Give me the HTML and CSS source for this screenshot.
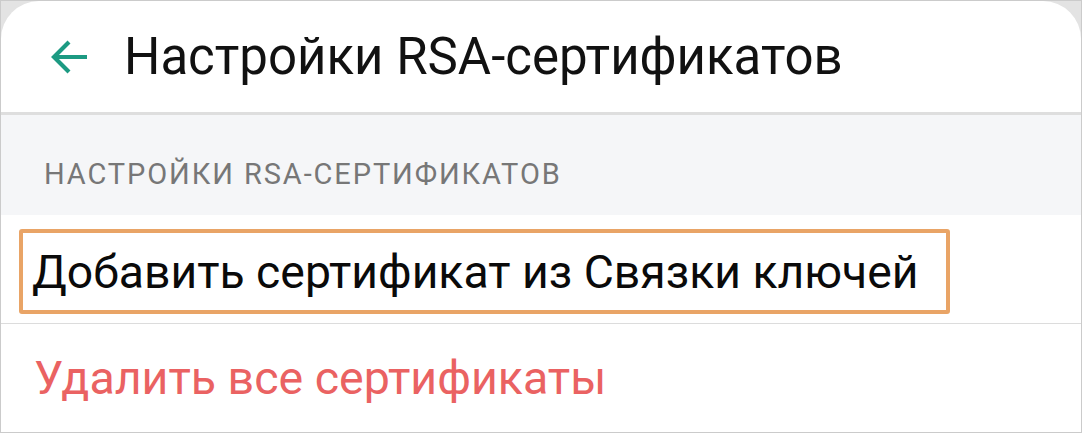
FILE: index.html
```html
<!DOCTYPE html>
<html lang="ru">
<head>
  <meta charset="UTF-8">
  <meta name="viewport" content="width=device-width, initial-scale=1.0">
  <title>Настройки RSA-сертификатов</title>
  <link rel="stylesheet" href="styles.css">
</head>
<body>
  <div class="frame">
    <div class="screen">
      <div class="toolbar">
        <svg class="back" width="38" height="36" viewBox="0 0 38 36">
          <path d="M37 18 H4 M19 3 L4 18 L19 33" fill="none" stroke="#1c9a82" stroke-width="4.2"/>
        </svg>
        <h1>Настройки RSA-сертификатов</h1>
      </div>
      <div class="section-head">НАСТРОЙКИ RSA-СЕРТИФИКАТОВ</div>
      <div class="row row-add">
        <div class="highlight">Добавить сертификат из Связки ключей</div>
      </div>
      <div class="row row-delete">Удалить все сертификаты</div>
    </div>
  </div>
</body>
</html>
```
FILE: styles.css
```css
body { margin: 0; font-family: Roboto, "Noto Sans", sans-serif; background-color: #fff; }
.frame { width: 1082px; height: 433px; box-sizing: border-box; border: 1px solid #cbcbcb; background-color: #e3e3e3; overflow: hidden; }
.screen { background-color: #fff; height: 100%; border-radius: 38px 38px 0 0; overflow: hidden; display: flex; flex-direction: column; }
.toolbar { height: 111px; border-bottom: 3px solid #dedede; display: flex; align-items: center; padding-left: 49px; gap: 36px; }
.toolbar h1 { margin: 0; font-size: 51px; font-weight: 400; color: #111; }
.back { flex: none; }
.section-head { height: 100px; box-sizing: border-box; background-color: #f5f6f8; padding: 42px 0 0 43px; font-size: 29px; letter-spacing: 1.9px; color: #777; }
.row { height: 108px; box-sizing: border-box; display: flex; align-items: center; }
.row-add { border-bottom: 1px solid #dcdcdc; padding: 14px 0 9px 18px; align-items: stretch; height: 109px; }
.highlight { display: flex; align-items: center; border: 4px solid #e9a466; border-radius: 3px; padding: 0 28px 0 9px; font-size: 46.3px; color: #0a0a0a; }
.row-delete { padding-left: 33px; font-size: 46.5px; color: #ea6262; }
```
